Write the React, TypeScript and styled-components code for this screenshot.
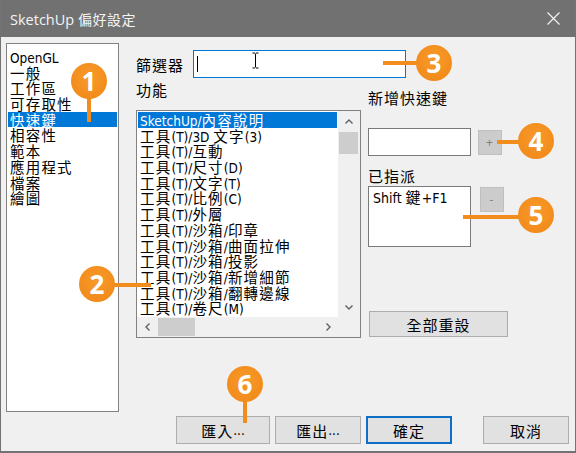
import React from 'react';
import styled, { createGlobalStyle } from 'styled-components';

const CJK = '"Noto Sans CJK TC", "Noto Sans", sans-serif';
const LATIN = '"Open Sans", "Noto Sans", sans-serif';
const NARROW = '"Liberation Sans Narrow", "DejaVu Sans Condensed", "Noto Sans CJK TC", sans-serif';

const GlobalStyle = createGlobalStyle`
  html, body {
    margin: 0;
    padding: 0;
    background: #f0f0f0;
  }
  body {
    font-family: ${CJK};
  }
`;

const categories = ['OpenGL', '一般', '工作區', '可存取性', '快速鍵', '相容性', '範本', '應用程式', '檔案', '繪圖'];

const functions = [
  'SketchUp/內容說明',
  '工具(T)/3D 文字(3)',
  '工具(T)/互動',
  '工具(T)/尺寸(D)',
  '工具(T)/文字(T)',
  '工具(T)/比例(C)',
  '工具(T)/外層',
  '工具(T)/沙箱/印章',
  '工具(T)/沙箱/曲面拉伸',
  '工具(T)/沙箱/投影',
  '工具(T)/沙箱/新增細節',
  '工具(T)/沙箱/翻轉邊線',
  '工具(T)/卷尺(M)',
];

// callouts: circle centre + leader line rect
const callouts = [
  { n: 1, x: 88, y: 81, line: { x: 86, y: 81, w: 4, h: 41 } },
  { n: 2, x: 96, y: 284, line: { x: 96, y: 283, w: 54, h: 4 } },
  { n: 3, x: 433, y: 63, line: { x: 382, y: 61, w: 51, h: 4 } },
  { n: 4, x: 535, y: 141, line: { x: 496, y: 140, w: 39, h: 4 } },
  { n: 5, x: 535, y: 215, line: { x: 462, y: 215, w: 73, h: 4 } },
  { n: 6, x: 244, y: 384, line: { x: 242, y: 384, w: 4, h: 39 } },
];

const Lat = styled.span<{ $size?: number; $wide?: boolean }>`
  font-family: ${(p) => (p.$wide ? LATIN : NARROW)};
  font-size: ${(p) => p.$size ?? 13.5}px;
  letter-spacing: 0;
`;

function Mixed({ text, latin }: { text: string; latin?: number }) {
  const parts = text.split(/([^\u2E80-\uFFEF]+)/).filter(Boolean);
  return (
    <>
      {parts.map((part, i) =>
        /[\u2E80-\uFFEF]/.test(part) ? (
          <span key={i}>{part}</span>
        ) : (
          <Lat key={i} $size={latin}>
            {part}
          </Lat>
        )
      )}
    </>
  );
}

const Window = styled.div`
  position: relative;
  width: 576px;
  height: 453px;
  box-sizing: border-box;
  display: flex;
  flex-direction: column;
  background: #f0f0f0;
  border: 1px solid #737373;
  border-top: none;
  border-bottom-width: 2px;
  overflow: hidden;
  color: #000;
  font-family: ${CJK};
  font-size: 15px;
  letter-spacing: 1px;
`;

const TitleBar = styled.div`
  flex: none;
  height: 37px;
  margin: 0 -1px;
  background: #717171;
  display: flex;
  align-items: center;
  justify-content: space-between;
  padding: 0 16px 0 10px;
  color: #f4f4f4;
  font-size: 14px;
  letter-spacing: 0.5px;
`;

const CloseIcon = () => (
  <svg width="13" height="13" viewBox="0 0 13 13">
    <path d="M0.5 0.5L12.5 12.5M12.5 0.5L0.5 12.5" stroke="#f2f2f2" strokeWidth="1.2" />
  </svg>
);

const Body = styled.div`
  flex: 1;
  display: grid;
  grid-template-columns: 113px 1fr;
  column-gap: 17px;
  padding: 6px 6px 7px 5px;
  min-height: 0;
`;

const SideList = styled.div`
  height: 369px;
  box-sizing: border-box;
  border: 1px solid #828282;
  background: #fff;
  padding: 5px 1px 0;
`;

const Row = styled.div<{ $active?: boolean }>`
  height: 15.7px;
  line-height: 15.7px;
  padding-left: 2px;
  font-size: 14.5px;
  letter-spacing: 1.2px;
  white-space: nowrap;
  background: ${(p) => (p.$active ? '#0078d7' : 'transparent')};
  color: ${(p) => (p.$active ? '#fff' : '#000')};
`;

const Main = styled.div`
  display: flex;
  flex-direction: column;
  min-height: 0;
`;

const FilterRow = styled.div`
  margin-top: 7px;
  height: 28px;
  display: flex;
  align-items: center;
`;

const FilterLabel = styled.div`
  width: 57px;
  flex: none;
`;

const TextBox = styled.div<{ $focus?: boolean; $w: number; $h: number }>`
  position: relative;
  width: ${(p) => p.$w}px;
  height: ${(p) => p.$h}px;
  box-sizing: border-box;
  background: #fff;
  border: 1px solid ${(p) => (p.$focus ? '#0078d7' : '#7a7a7a')};
  display: flex;
  align-items: center;
  padding-left: 3px;
`;

const Caret = styled.div`
  width: 1px;
  height: 16px;
  background: #000;
`;

const IBeam = styled.svg`
  position: absolute;
  left: 58px;
  top: 1px;
`;

const Lower = styled.div`
  display: flex;
  gap: 7px;
`;

const FuncCol = styled.div`
  width: 225px;
  flex: none;
  display: flex;
  flex-direction: column;
`;

const Caption = styled.div<{ $top?: number }>`
  height: 16px;
  line-height: 16px;
  margin-top: ${(p) => p.$top ?? 0}px;
  white-space: nowrap;
`;

const ListBox = styled.div`
  margin-top: 12px;
  width: 225px;
  height: 228px;
  box-sizing: border-box;
  border: 1px solid #828282;
  background: #fff;
  display: grid;
  grid-template-columns: 1fr 22px;
  grid-template-rows: 1fr 20px;
`;

const Rows = styled.div`
  padding: 1px;
  overflow: hidden;
`;

const ScrollBar = styled.div<{ $dir: 'v' | 'h' }>`
  background: #f0f0f0;
  display: flex;
  flex-direction: ${(p) => (p.$dir === 'v' ? 'column' : 'row')};
`;

const ScrollArrow = styled.div<{ $dir: 'v' | 'h' }>`
  flex: none;
  width: ${(p) => (p.$dir === 'v' ? '100%' : '21px')};
  height: ${(p) => (p.$dir === 'v' ? '21px' : '100%')};
  display: flex;
  align-items: center;
  justify-content: center;
`;

const Thumb = styled.div<{ $dir: 'v' | 'h' }>`
  flex: none;
  background: #cdcdcd;
  ${(p) =>
    p.$dir === 'v'
      ? 'height: 22px; margin: 0 2px 0 1px;'
      : 'width: 37px; margin: 1px 0;'}
`;

const Track = styled.div`
  flex: 1;
`;

const Corner = styled.div`
  background: #f0f0f0;
`;

const Chevron = ({ rot }: { rot: number }) => (
  <svg width="10" height="10" viewBox="0 0 10 10" style={{ transform: `rotate(${rot}deg)` }}>
    <polyline points="1.5,6.5 5,3 8.5,6.5" fill="none" stroke="#606060" strokeWidth="1.4" />
  </svg>
);

const SideCol = styled.div`
  flex: 1;
  display: flex;
  flex-direction: column;
  align-items: flex-start;
`;

const FieldRow = styled.div<{ $top: number; $align: string; $gap: number }>`
  margin-top: ${(p) => p.$top}px;
  display: flex;
  align-items: ${(p) => p.$align};
  gap: ${(p) => p.$gap}px;
`;

const SmallButton = styled.div<{ $top?: number }>`
  width: 24px;
  height: 25px;
  margin-top: ${(p) => p.$top ?? 0}px;
  box-sizing: border-box;
  background: #cccccc;
  border: 1px solid #bfbfbf;
  color: #808080;
  font-family: ${LATIN};
  font-size: 12px;
  display: flex;
  align-items: center;
  justify-content: center;
`;

const AssignedBox = styled.div`
  width: 103px;
  height: 61px;
  box-sizing: border-box;
  background: #fff;
  border: 1px solid #7a7a7a;
  padding: 1px 4px;
  line-height: 18px;
  white-space: nowrap;
`;

const Button = styled.div<{ $w: number; $primary?: boolean }>`
  width: ${(p) => p.$w}px;
  height: 100%;
  box-sizing: border-box;
  background: #e1e1e1;
  border: ${(p) => (p.$primary ? '2px solid #0f6fc6' : '1px solid #adadad')};
  display: flex;
  align-items: center;
  justify-content: center;
  white-space: nowrap;
`;

const ResetButton = styled(Button)`
  height: 26px;
  margin: auto 0 1px 1px;
`;

const ButtonRow = styled.div`
  margin-top: auto;
  height: 28px;
  display: flex;
  justify-content: flex-end;
  gap: 5px;
`;

const Spacer = styled.div`
  width: 21px;
`;

const Badge = styled.div<{ $x: number; $y: number }>`
  position: absolute;
  left: ${(p) => p.$x - 18}px;
  top: ${(p) => p.$y - 18}px;
  width: 36px;
  height: 36px;
  border-radius: 50%;
  background: radial-gradient(circle at 50% 40%, #f89a2a 0%, #f28c1c 70%, #ea8414 100%);
  color: #fff;
  font-family: ${LATIN};
  font-weight: 700;
  font-size: 26px;
  line-height: 36px;
  text-align: center;
  letter-spacing: 0;
  z-index: 3;
`;

const Leader = styled.div<{ $x: number; $y: number; $w: number; $h: number }>`
  position: absolute;
  left: ${(p) => p.$x}px;
  top: ${(p) => p.$y}px;
  width: ${(p) => p.$w}px;
  height: ${(p) => p.$h}px;
  background: #f28c1c;
  z-index: 2;
`;

export default function App() {
  return (
    <>
      <GlobalStyle />
      <Window>
        <TitleBar>
          <span>
            <Lat $size={14.5} $wide>
              SketchUp{' '}
            </Lat>
            偏好設定
          </span>
          <CloseIcon />
        </TitleBar>
        <Body>
          <SideList>
            {categories.map((c) => (
              <Row key={c} $active={c === '快速鍵'}>
                <Mixed text={c} />
              </Row>
            ))}
          </SideList>
          <Main>
            <FilterRow>
              <FilterLabel>篩選器</FilterLabel>
              <TextBox $focus $w={213} $h={28}>
                <Caret />
                <IBeam width="7" height="17" viewBox="0 0 7 17">
                  <path
                    d="M0.5 1h2.5M4 1h2.5M3.5 1.5v14M0.5 16h2.5M4 16h2.5"
                    stroke="#000"
                    strokeWidth="1"
                    fill="none"
                  />
                </IBeam>
              </TextBox>
            </FilterRow>
            <Lower>
              <FuncCol>
                <Caption $top={4}>功能</Caption>
                <ListBox>
                  <Rows>
                    {functions.map((f, i) => (
                      <Row key={f} $active={i === 0}>
                        <Mixed text={f} />
                      </Row>
                    ))}
                  </Rows>
                  <ScrollBar $dir="v">
                    <ScrollArrow $dir="v">
                      <Chevron rot={0} />
                    </ScrollArrow>
                    <Thumb $dir="v" />
                    <Track />
                    <ScrollArrow $dir="v">
                      <Chevron rot={180} />
                    </ScrollArrow>
                  </ScrollBar>
                  <ScrollBar $dir="h">
                    <ScrollArrow $dir="h">
                      <Chevron rot={-90} />
                    </ScrollArrow>
                    <Thumb $dir="h" />
                    <Track />
                    <ScrollArrow $dir="h">
                      <Chevron rot={90} />
                    </ScrollArrow>
                  </ScrollBar>
                  <Corner />
                </ListBox>
              </FuncCol>
              <SideCol>
                <Caption $top={12}>新增快速鍵</Caption>
                <FieldRow $top={22} $align="center" $gap={7}>
                  <TextBox $w={103} $h={28} />
                  <SmallButton>+</SmallButton>
                </FieldRow>
                <Caption $top={12}>已指派</Caption>
                <FieldRow $top={2} $align="flex-start" $gap={9}>
                  <AssignedBox>
                    <Mixed text="Shift 鍵+F1" latin={14} />
                  </AssignedBox>
                  <SmallButton $top={1}>-</SmallButton>
                </FieldRow>
                <ResetButton $w={139}>全部重設</ResetButton>
              </SideCol>
            </Lower>
            <ButtonRow>
              <Button $w={94}>
                <Mixed text="匯入..." />
              </Button>
              <Button $w={86}>
                <Mixed text="匯出..." />
              </Button>
              <Button $w={86} $primary>
                確定
              </Button>
              <Spacer />
              <Button $w={86}>取消</Button>
            </ButtonRow>
          </Main>
        </Body>
        {callouts.map((c) => (
          <React.Fragment key={c.n}>
            <Leader $x={c.line.x} $y={c.line.y} $w={c.line.w} $h={c.line.h} />
            <Badge $x={c.x} $y={c.y}>
              {c.n}
            </Badge>
          </React.Fragment>
        ))}
      </Window>
    </>
  );
}
